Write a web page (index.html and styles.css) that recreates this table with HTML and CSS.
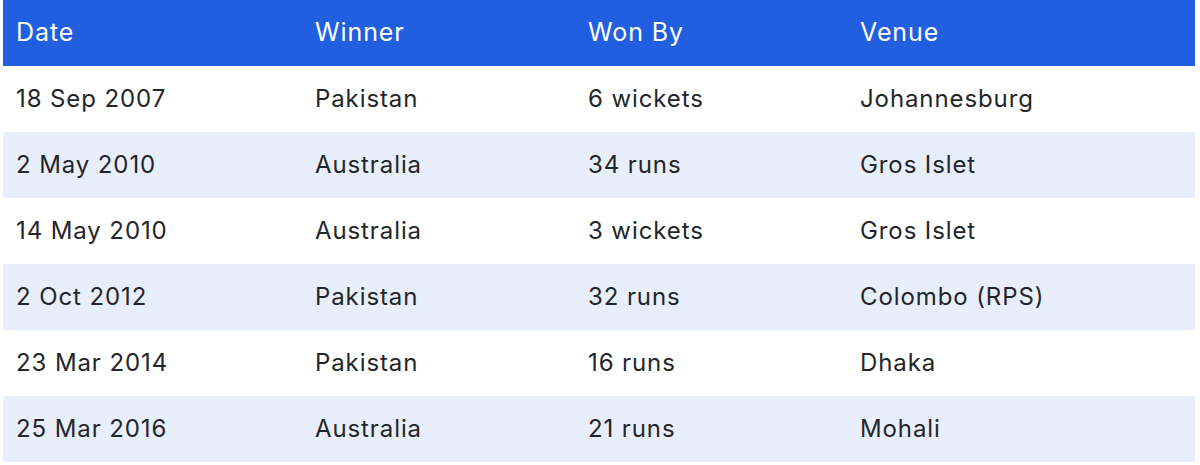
FILE: index.html
```html
<!DOCTYPE html>
<html>
<head>
<meta charset="utf-8">
<link rel="stylesheet" href="styles.css">
</head>
<body>
<table class="results">
  <colgroup>
    <col class="c-date"><col class="c-winner"><col class="c-by"><col class="c-venue">
  </colgroup>
  <thead>
    <tr><th>Date</th><th>Winner</th><th>Won By</th><th>Venue</th></tr>
  </thead>
  <tbody>
    <tr><td>18 Sep 2007</td><td>Pakistan</td><td>6 wickets</td><td>Johannesburg</td></tr>
    <tr><td>2 May 2010</td><td>Australia</td><td>34 runs</td><td>Gros Islet</td></tr>
    <tr><td>14 May 2010</td><td>Australia</td><td>3 wickets</td><td>Gros Islet</td></tr>
    <tr><td>2 Oct 2012</td><td>Pakistan</td><td>32 runs</td><td>Colombo (RPS)</td></tr>
    <tr><td>23 Mar 2014</td><td>Pakistan</td><td>16 runs</td><td>Dhaka</td></tr>
    <tr><td>25 Mar 2016</td><td>Australia</td><td>21 runs</td><td>Mohali</td></tr>
  </tbody>
</table>
</body>
</html>
```
FILE: styles.css
```css
html, body {
  margin: 0;
  padding: 0;
  background: #ffffff;
}
body {
  padding: 0 5px 0 3px;
  font-family: Inter, "Liberation Sans", sans-serif;
}
.results {
  width: 1192px;
  border-collapse: collapse;
  table-layout: fixed;
}
.c-date { width: 299px; }
.c-winner { width: 273px; }
.c-by { width: 272px; }
.c-venue { width: 348px; }
.results th, .results td {
  height: 66px;
  padding: 0 0 0 13px;
  text-align: left;
  font-size: 24px;
  letter-spacing: 0.9px;
  font-weight: 400;
  box-sizing: border-box;
  vertical-align: middle;
}
.results th {
  background: #1f5fe0;
  color: #ffffff;
  font-size: 25px;
  padding-bottom: 3px;
}
.results td {
  color: #232629;
  padding-bottom: 1px;
}
.results tbody tr:nth-child(even) td {
  background: #e8eefb;
}
```
